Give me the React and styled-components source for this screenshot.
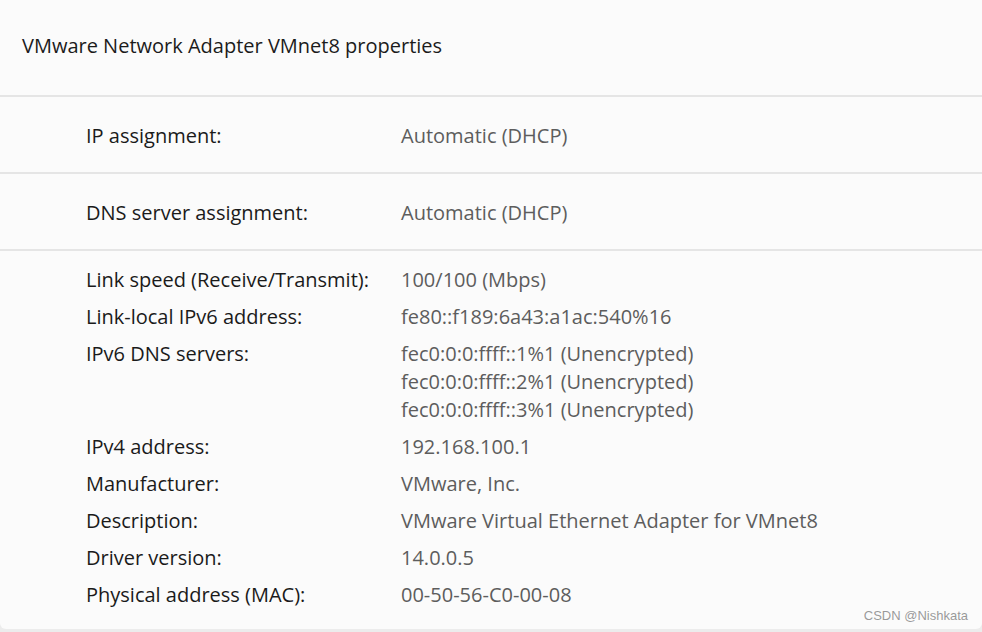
import React from "react";
import styled, { createGlobalStyle } from "styled-components";

const GlobalStyle = createGlobalStyle`
  html, body {
    margin: 0;
    padding: 0;
    background: #ececec;
  }
  body {
    font-family: "Open Sans", "Noto Sans", sans-serif;
    -webkit-font-smoothing: antialiased;
  }
`;

const Page = styled.div`
  position: relative;
  width: 982px;
  height: 632px;
  overflow: hidden;
  background: #ececec;
`;

const Card = styled.div`
  width: 100%;
  height: 629px;
  background: #fbfbfb;
  border-radius: 0 0 6px 6px;
  display: flex;
  flex-direction: column;
`;

const Header = styled.div`
  height: 97px;
  display: flex;
  align-items: center;
  padding-left: 22px;
  padding-bottom: 4px;
  border-bottom: 2px solid #e5e5e5;
  font-size: 20px;
  color: #1b1b1b;
  box-sizing: border-box;
`;

const Section = styled.div`
  display: flex;
  flex-direction: column;
  gap: 9px;
  padding: ${(p) => (p.dense ? "15px 0 19px 86px" : "3px 0 0 86px")};
  height: ${(p) => (p.dense ? "auto" : "77px")};
  justify-content: center;
  box-sizing: border-box;
  border-bottom: ${(p) => (p.last ? "none" : "2px solid #e5e5e5")};
`;

const Row = styled.div`
  display: grid;
  grid-template-columns: 315px 1fr;
  align-items: start;
`;

const Label = styled.div`
  font-size: 20px;
  line-height: 28px;
  color: #1a1a1a;
`;

const Value = styled.div`
  font-size: 20px;
  line-height: 28px;
  color: #5d5d5d;
  white-space: pre-line;
`;

const Watermark = styled.div`
  position: absolute;
  right: 14px;
  bottom: 9px;
  font-family: "Liberation Sans", Arial, sans-serif;
  font-size: 13px;
  color: rgba(120, 120, 120, 0.75);
`;

const details = [
  ["Link speed (Receive/Transmit):", "100/100 (Mbps)"],
  ["Link-local IPv6 address:", "fe80::f189:6a43:a1ac:540%16"],
  [
    "IPv6 DNS servers:",
    "fec0:0:0:ffff::1%1 (Unencrypted)\nfec0:0:0:ffff::2%1 (Unencrypted)\nfec0:0:0:ffff::3%1 (Unencrypted)",
  ],
  ["IPv4 address:", "192.168.100.1"],
  ["Manufacturer:", "VMware, Inc."],
  ["Description:", "VMware Virtual Ethernet Adapter for VMnet8"],
  ["Driver version:", "14.0.0.5"],
  ["Physical address (MAC):", "00-50-56-C0-00-08"],
];

const App = () => {
  return (
    <Page>
      <GlobalStyle />
      <Card>
        <Header>VMware Network Adapter VMnet8 properties</Header>
        <Section>
          <Row>
            <Label>IP assignment:</Label>
            <Value>Automatic (DHCP)</Value>
          </Row>
        </Section>
        <Section>
          <Row>
            <Label>DNS server assignment:</Label>
            <Value>Automatic (DHCP)</Value>
          </Row>
        </Section>
        <Section dense last>
          {details.map(([label, value]) => (
            <Row key={label}>
              <Label>{label}</Label>
              <Value>{value}</Value>
            </Row>
          ))}
        </Section>
      </Card>
      <Watermark>CSDN @Nishkata</Watermark>
    </Page>
  );
};

export default App;
